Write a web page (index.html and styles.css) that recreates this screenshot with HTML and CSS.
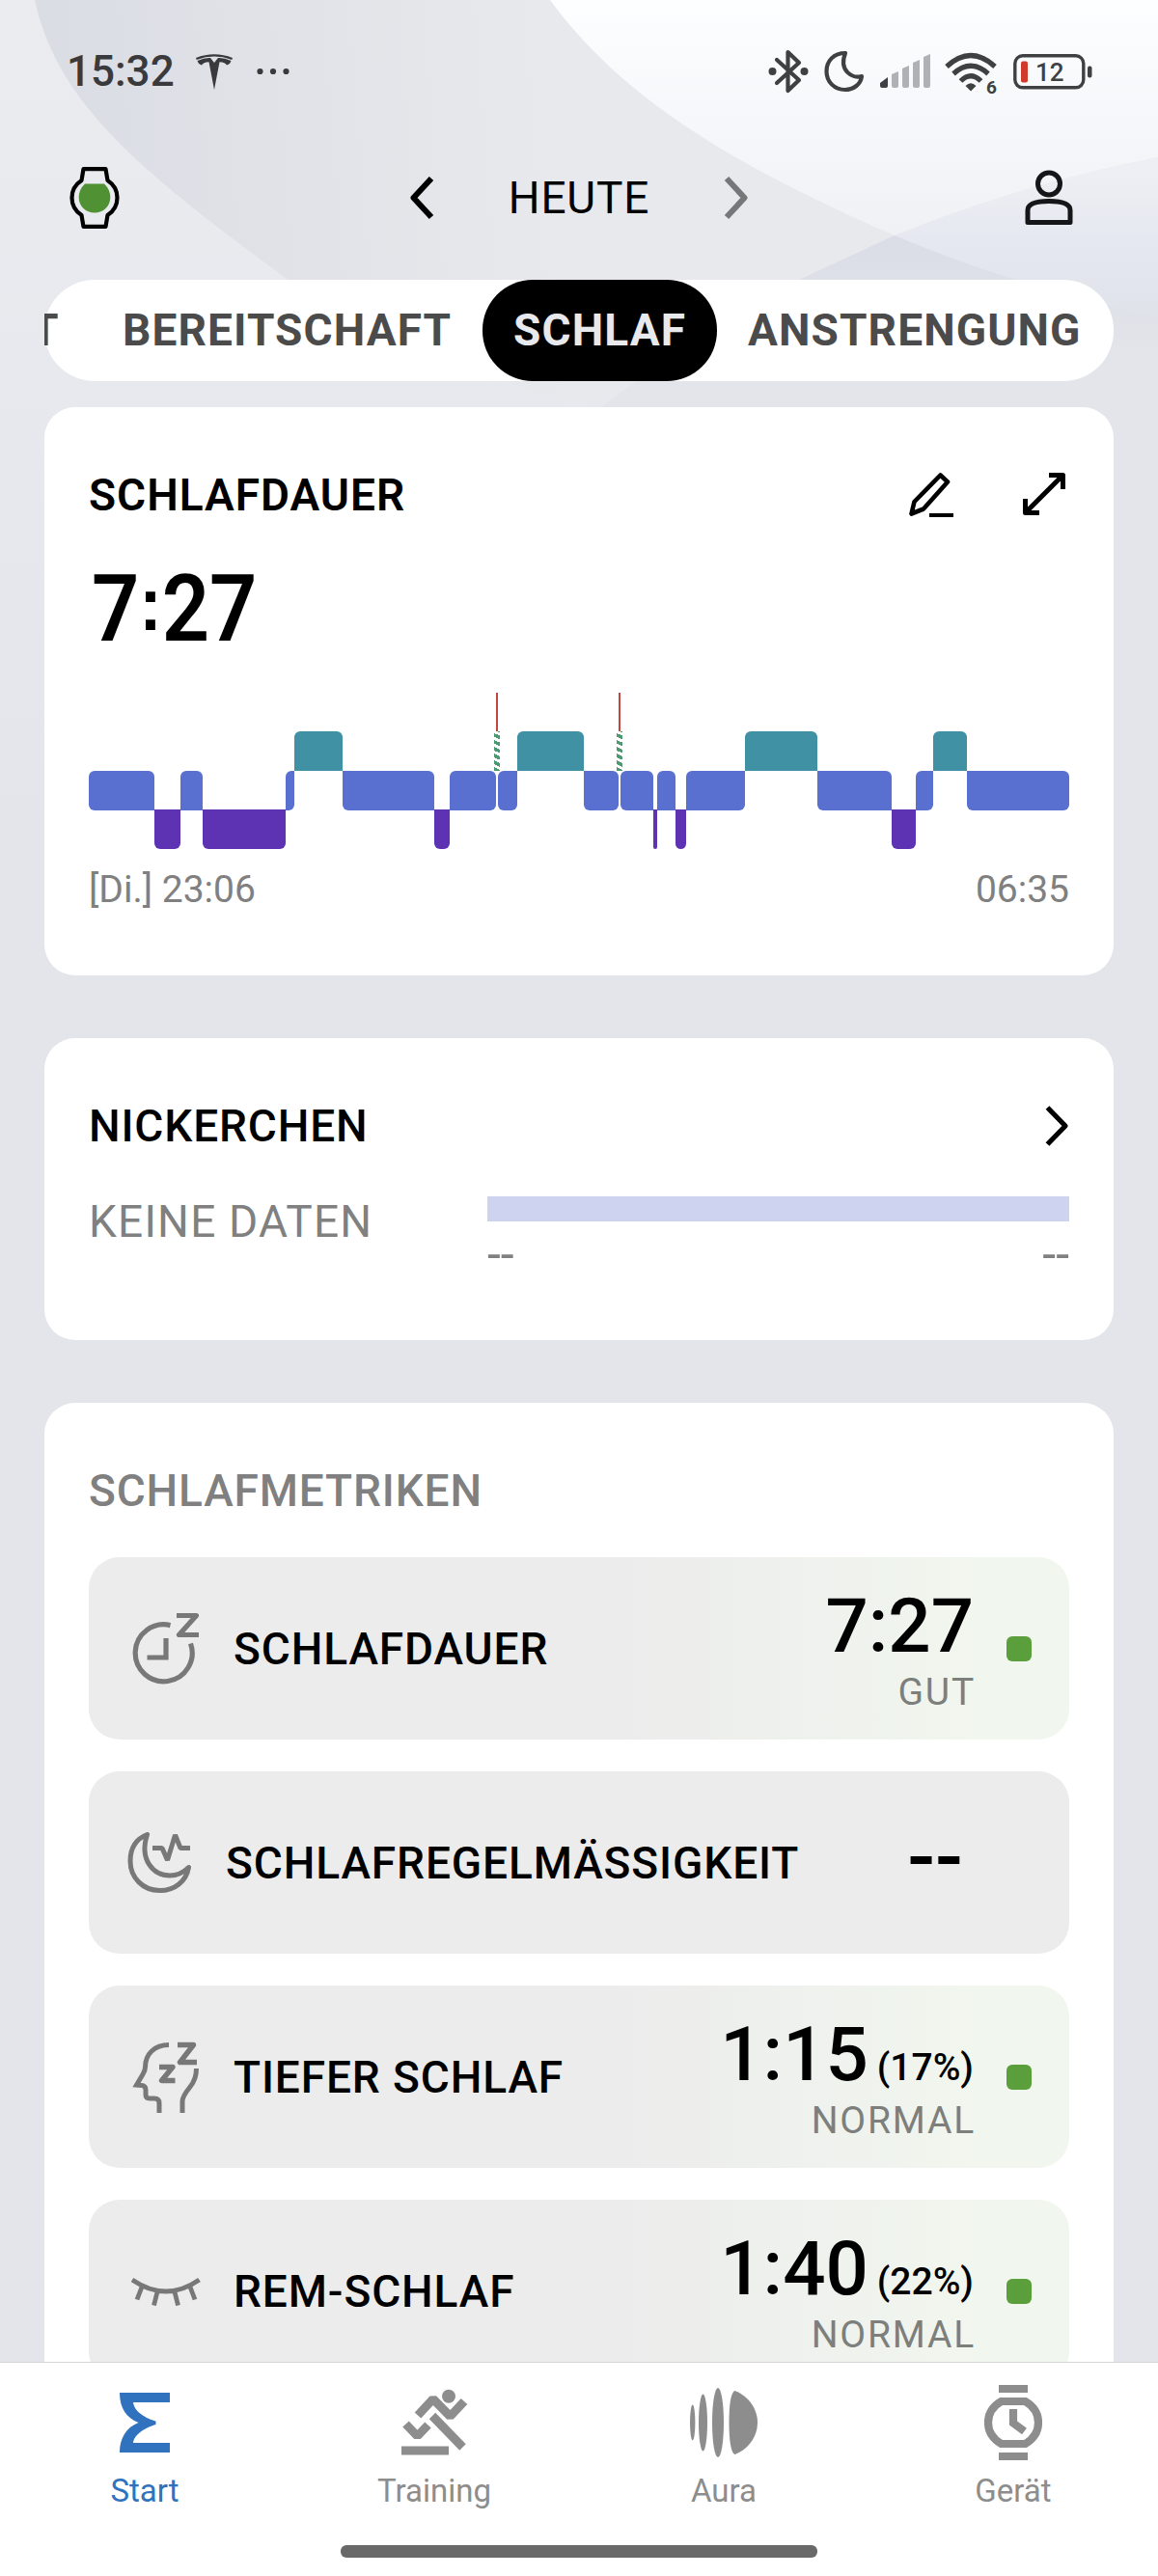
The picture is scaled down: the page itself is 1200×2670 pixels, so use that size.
FILE: index.html
```
<!DOCTYPE html>
<html lang="de">
<head>
    <meta charset="UTF-8">
    <title>Schlaf</title>
    <link rel="stylesheet" href="styles.css">
</head>
<body>
    <svg class="backdrop" width="1200" height="900" viewBox="0 0 1200 900">
        <defs>
            <linearGradient id="base" x1="0" y1="0" x2="0" y2="1">
                <stop offset="0" stop-color="#ebecf0"/>
                <stop offset="1" stop-color="#e4e5eb"/>
            </linearGradient>
            <linearGradient id="disc" gradientUnits="userSpaceOnUse" x1="60" y1="100" x2="560" y2="60">
                <stop offset="0" stop-color="#dadde4"/>
                <stop offset="0.5" stop-color="#e1e3e8"/>
                <stop offset="1" stop-color="#e8e9ed"/>
            </linearGradient>
            <linearGradient id="sky" x1="0" y1="0" x2="0" y2="1">
                <stop offset="0" stop-color="#fdfeff"/>
                <stop offset="1" stop-color="#f0f1f5"/>
            </linearGradient>
            <linearGradient id="side" gradientUnits="userSpaceOnUse" x1="1100" y1="180" x2="1100" y2="320">
                <stop offset="0" stop-color="#eeeff4"/>
                <stop offset="0.5" stop-color="#e5e8f0"/>
                <stop offset="1" stop-color="#e0e3ea"/>
            </linearGradient>
            <linearGradient id="low" gradientUnits="userSpaceOnUse" x1="930" y1="243" x2="930" y2="900">
                <stop offset="0" stop-color="#dadde6"/>
                <stop offset="0.2" stop-color="#e3e5ea"/>
                <stop offset="1" stop-color="#e4e5eb"/>
            </linearGradient>
        </defs>
        <rect width="1200" height="900" fill="url(#base)"/>
        <path d="M36 0C60 110 150 180 297 289Q380 350 600 420L830 289L927 244Q700 150 570 0Z" fill="url(#disc)"/>
        <path d="M570 0C650 110 780 180 927 244Q1060 190 1200 163V0Z" fill="url(#sky)"/>
        <path d="M927 244Q1060 190 1200 163V328Q1060 300 927 244Z" fill="url(#side)"/>
        <path d="M927 244Q1060 300 1200 328V900H1120Q600 600 600 440Q700 360 830 289Z" fill="url(#low)"/>
    </svg>

    <div class="screen">
        <div class="status-bar">
            <span class="clock">15:32</span>
            <svg class="tesla" width="38" height="37" viewBox="0 0 38 37" fill="#3a3a3c">
                <path d="M0 4Q19 -3.500 38 4L37.300 6Q19 -.8 .7 6Z"/>
                <path d="M1.500 7Q9 3.600 15 4L19 9L23 4Q29 3.600 36.500 7Q35.500 10.500 32 11.500Q30.500 8.600 24.500 8.200L19 37L13.500 8.200Q7.500 8.600 6 11.500Q2.500 10.500 1.500 7Z"/>
            </svg>
            <svg class="more" width="34" height="8" viewBox="0 0 34 8" fill="#3a3a3c">
                <circle cx="3.500" cy="4" r="3.100"/><circle cx="17" cy="4" r="3.100"/><circle cx="30.500" cy="4" r="3.100"/>
            </svg>
            <div class="status-icons">
                <svg width="42" height="46" viewBox="0 0 42 46">
                    <path d="M9 11L32 32L20.500 43V3L32 14L9 35" fill="none" stroke="#3f4041" stroke-width="4.200" stroke-linejoin="round" stroke-linecap="round"/>
                    <circle cx="4.500" cy="23" r="4" fill="#3f4041"/><circle cx="37.500" cy="23" r="4" fill="#3f4041"/>
                </svg>
                <svg width="42" height="44" viewBox="0 0 42 44">
                    <path d="M22 3C10 3 2.500 11 2.500 22S11 41 21.500 41C31 41 38 35 39 27C29 30 15 21 22 3Z" fill="none" stroke="#3f4041" stroke-width="4.200" stroke-linejoin="round"/>
                </svg>
                <svg class="signal" width="53" height="36" viewBox="0 0 53 36" fill="#b0b1b4">
                    <path d="M0 30L8 24V33Q8 35 6 35H2Q0 35 0 33Z" fill="#3f4041"/>
                    <path d="M12 21L19 18V33Q19 35 17 35H14Q12 35 12 33Z"/>
                    <path d="M23 15L30 12V33Q30 35 28 35H25Q23 35 23 33Z"/>
                    <path d="M34 9L41 6V33Q41 35 39 35H36Q34 35 34 33Z"/>
                    <path d="M45 3L52 0V33Q52 35 50 35H47Q45 35 45 33Z"/>
                </svg>
                <svg class="wifi" width="56" height="46" viewBox="0 0 56 46">
                    <g fill="none" stroke="#3f4041" stroke-width="5.200">
                        <path d="M2 18Q27 -5 52 18"/><path d="M9 25.500Q27 9 45 25.500"/><path d="M16.500 33Q27 22.500 37.500 33"/>
                    </g>
                    <path d="M21.500 38Q27 32.500 32.500 38L27 43.500Z" fill="#3f4041"/>
                    <text x="43" y="46" font-size="19" font-weight="700" fill="#3f4041">6</text>
                </svg>
                <svg width="82" height="37" viewBox="0 0 82 37">
                    <rect x="1.800" y="1.800" width="71" height="33" rx="8" fill="none" stroke="#3f4041" stroke-width="3.400"/>
                    <rect x="77" y="12.500" width="4.500" height="12" rx="2" fill="#3f4041"/>
                    <rect x="8" y="7.500" width="7" height="22" rx="2" fill="#d03a2c"/>
                    <text x="23" y="28" font-size="26" font-weight="500" fill="#3f4041">12</text>
                </svg>
            </div>
        </div>

        <header class="top-bar">
            <svg width="52" height="64" viewBox="0 0 52 64">
                <path d="M14.500 2.200H37.500L39.500 14Q49.500 20.500 49.500 32T39.500 50L37.500 61.800H14.500L12.500 50Q2.500 43.500 2.500 32T12.500 14Z" fill="none" stroke="#000" stroke-width="4.200" stroke-linejoin="round"/>
                <path d="M16 17.500H36Q42.300 23.500 42.300 31.500C42.300 41 35 47.500 26 47.500S9.700 41 9.700 31.500Q9.700 23.500 16 17.500Z" fill="#509134"/>
            </svg>
            <div class="day-picker">
                <svg width="26" height="46" viewBox="0 0 26 46" fill="none" stroke="#000" stroke-width="6" stroke-linejoin="round"><path d="M23 3L4.500 23L23 43"/></svg>
                <span>HEUTE</span>
                <svg width="26" height="46" viewBox="0 0 26 46" fill="none" stroke="#767779" stroke-width="6" stroke-linejoin="round"><path d="M3 3L21.500 23L3 43"/></svg>
            </div>
            <svg width="50" height="58" viewBox="0 0 50 58" fill="none" stroke="#151617" stroke-width="5">
                <ellipse cx="25" cy="14.500" rx="11.500" ry="11.500"/>
                <path d="M3 54.500V42Q3 32.500 25 32.500T47 42V54.500Z" stroke-linejoin="round"/>
            </svg>
        </header>

        <nav class="tabs">
            <span class="tab tab-cut">T</span>
            <span class="tab tab-ready">BEREITSCHAFT</span>
            <span class="tab active">SCHLAF</span>
            <span class="tab tab-strain">ANSTRENGUNG</span>
        </nav>

        <main>
            <section class="card sleep">
                <div class="card-head">
                    <h2 class="bold">SCHLAFDAUER</h2>
                    <div class="actions">
                        <svg width="48" height="48" viewBox="0 0 48 48" fill="none" stroke="#000" stroke-width="4.600" stroke-linejoin="round">
                            <path d="M33.500 3.500L41 10.500L16 38.500L3.500 43.500L6.500 31Z"/><path d="M22 45H47" stroke-width="4"/>
                        </svg>
                        <svg width="46" height="46" viewBox="0 0 46 46" fill="none" stroke="#000" stroke-width="5" stroke-linejoin="round">
                            <path d="M4 42L42 4M28 3.500H42.500V18M3.500 28V42.500H18"/>
                        </svg>
                    </div>
                </div>
                <div class="duration">7<span class="colon">:</span>27</div>
                <div class="stages">
                    <div class="light" style="width: 68px"></div>
                    <div class="deep" style="width: 27px"></div>
                    <div class="light" style="width: 23px"></div>
                    <div class="deep" style="width: 86px"></div>
                    <div class="light" style="width: 9px"></div>
                    <div class="rem" style="width: 50px"></div>
                    <div class="light" style="width: 95px"></div>
                    <div class="deep" style="width: 16px"></div>
                    <div class="light" style="width: 48px"></div>
                    <div class="awake"></div>
                    <div class="light" style="width: 20px"></div>
                    <div class="rem" style="width: 69px"></div>
                    <div class="light" style="width: 36px"></div>
                    <div class="awake"></div>
                    <div class="light" style="width: 34px"></div>
                    <div class="deep" style="width: 4px"></div>
                    <div class="light" style="width: 19px"></div>
                    <div class="deep" style="width: 11px"></div>
                    <div class="light" style="width: 61px"></div>
                    <div class="rem" style="width: 75px"></div>
                    <div class="light" style="width: 77px"></div>
                    <div class="deep" style="width: 25px"></div>
                    <div class="light" style="width: 18px"></div>
                    <div class="rem" style="width: 35px"></div>
                    <div class="light" style="width: 106px"></div>
                </div>
                <div class="times"><span>[Di.] 23:06</span><span>06:35</span></div>
            </section>

            <section class="card nap">
                <div class="card-head">
                    <h2>NICKERCHEN</h2>
                    <svg width="26" height="44" viewBox="0 0 26 44" fill="none" stroke="#000" stroke-width="5.200" stroke-linejoin="round"><path d="M3.500 3L22 22L3.500 41"/></svg>
                </div>
                <div class="nap-body">
                    <span class="no-data">KEINE DATEN</span>
                    <div class="nap-chart">
                        <div class="nap-bar"></div>
                        <div class="nap-times"><span>--</span><span>--</span></div>
                    </div>
                </div>
            </section>

            <section class="card metrics">
                <h2>SCHLAFMETRIKEN</h2>
                <div class="metric rated">
                    <svg width="72" height="76" viewBox="0 0 72 76" fill="none" stroke="#787878" stroke-width="5.200">
                        <path d="M40.500 13.600A29.500 29.500 0 1 0 61.500 32.500"/>
                        <path d="M36 27V47H16.500"/>
                        <path d="M47 3.500H67.500L49.500 23.500H70" stroke-linejoin="round"/>
                    </svg>
                    <h3>SCHLAFDAUER</h3>
                    <div class="value"><p>7:27</p><small>GUT</small></div>
                    <i class="dot"></i>
                </div>
                <div class="metric regularity">
                    <svg width="68" height="66" viewBox="0 0 68 66" fill="none" stroke="#787878" stroke-width="5">
                        <path d="M20.500 3.500C9 8 3 18 3 31C3 48 16 61.500 33.500 61.500C49 61.500 61 52 63.500 37.500C57 44 51 46 44 46C27 46 12 30 20.500 3.500Z" stroke-linejoin="round"/>
                        <path d="M26 17.500H36L41.500 30L49.500 4L55 17.500H65" stroke-linejoin="bevel"/>
                    </svg>
                    <h3>SCHLAFREGELMÄSSIGKEIT</h3>
                    <div class="value"><p>--</p></div>
                </div>
                <div class="metric rated">
                    <svg width="72" height="76" viewBox="0 0 72 76" fill="none" stroke="#787878" stroke-width="5">
                        <path d="M39 4.500C24 4.500 14.500 14 14.500 27.500Q14.500 31 12 35L5.500 46L11 46.500Q15 47 15 51V56Q15 60 19 60H24Q29 60 29 65V75"/>
                        <path d="M67.500 29Q67.500 40 61 48Q53 58 53 63V75"/>
                        <path d="M48 4.500H64.500L50.500 22.500H68M29 27.500H43L31.500 41.500H45.500" stroke-width="5.400" stroke-linejoin="round"/>
                    </svg>
                    <h3>TIEFER SCHLAF</h3>
                    <div class="value"><p>1:15<b>(17%)</b></p><small>NORMAL</small></div>
                    <i class="dot"></i>
                </div>
                <div class="metric rated">
                    <svg width="72" height="32" viewBox="0 0 72 32" fill="none" stroke="#787878" stroke-width="4.800">
                        <path d="M1 4Q36 28 70.500 4M11.500 10L6 24.500M27 16.500L23.500 30.500M45 16.500L48.500 30.500M60.500 10L66 24.500"/>
                    </svg>
                    <h3>REM-SCHLAF</h3>
                    <div class="value"><p>1:40<b>(22%)</b></p><small>NORMAL</small></div>
                    <i class="dot"></i>
                </div>
            </section>
        </main>

        <footer class="bottom">
            <nav class="bottom-nav">
                <div class="item current">
                    <svg width="52" height="78" viewBox="0 0 52 78" fill="#3172bf">
                        <path d="M0 8H52V18H14C15 28 28 35 37.500 37.500V41C28 43.500 15 51 14 60H52V70H0C0 55 7 44 19.500 39C7 34 0 24 0 8Z"/>
                    </svg>
                    <span>Start</span>
                </div>
                <div class="item">
                    <svg width="70" height="78" viewBox="0 0 70 78" fill="none" stroke="#8d8d8d" stroke-width="9">
                        <ellipse cx="50" cy="11.800" rx="7" ry="7" fill="#8d8d8d" stroke="none"/>
                        <path d="M18 31.500L33.800 14.500L51.500 32.500L66 17" stroke-linejoin="bevel"/>
                        <path d="M33 32L64.500 64.500M5.500 40.500L17.500 53L28.500 41.500" stroke-linejoin="bevel"/>
                        <path d="M1 68H50"/>
                    </svg>
                    <span>Training</span>
                </div>
                <div class="item aura">
                    <svg width="70" height="78" viewBox="0 0 70 78" fill="#8d8d8d">
                        <ellipse cx="2.700" cy="39" rx="2.700" ry="18.500"/>
                        <ellipse cx="13.500" cy="39" rx="4.500" ry="29.500"/>
                        <ellipse cx="29" cy="39" rx="6" ry="36"/>
                        <path d="M46.500 6C60 11 70 24 70 39S60 67 46.500 72C42 70 40.500 55 40.500 39S42 8 46.500 6Z"/>
                    </svg>
                    <span>Aura</span>
                </div>
                <div class="item">
                    <svg width="60" height="78" viewBox="0 0 60 78" fill="none" stroke="#8d8d8d" stroke-width="8.200">
                        <path d="M15 4H45M15 74H45"/>
                        <path d="M17.500 17H42.500Q56 25 56 39T42.500 61H17.500Q4 53 4 39T17.500 17Z"/>
                        <path d="M30 25V39.500L41.500 48"/>
                    </svg>
                    <span>Gerät</span>
                </div>
            </nav>
            <div class="home-bar"></div>
        </footer>
    </div>
</body>
</html>
```
FILE: styles.css
```
* {
    box-sizing: border-box;
}

body {
    margin: 0;
    background-color: #e4e5eb;
    color: #000;
    font-family: Roboto, sans-serif;
}

svg {
    display: block;
    flex-shrink: 0;
}

h2, h3, p {
    margin: 0;
    font-weight: 500;
}

/* curved shapes behind the whole screen */
.backdrop {
    position: absolute;
    top: 0;
    left: 0;
    z-index: -1;
}

.screen {
    display: flex;
    flex-direction: column;
    width: 1200px;
    height: 2670px;
    overflow: hidden;
}

.status-bar {
    display: flex;
    align-items: center;
    flex-shrink: 0;
    height: 148px;
    padding: 0 68px 0 69px;
}

.clock {
    width: 134px;
    font-size: 44px;
    font-weight: 500;
    color: #3a3a3c;
}

.more {
    margin-left: 25px;
}

.status-icons {
    display: flex;
    align-items: center;
    gap: 16px;
    margin-left: auto;
}

.signal {
    margin-right: -2px;
}

.wifi {
    margin-right: -1px;
    overflow: visible;
}

.top-bar {
    display: flex;
    align-items: center;
    justify-content: space-between;
    flex-shrink: 0;
    height: 114px;
    padding: 0 88px 0 72px;
}

.day-picker {
    display: flex;
    align-items: center;
    justify-content: space-between;
    width: 352px;
    margin-left: 14px;
    font-size: 46px;
    font-weight: 450;
    letter-spacing: 0.8px;
}

.tabs {
    display: flex;
    flex-shrink: 0;
    width: 1108px;
    height: 105px;
    margin: 28px 46px 27px;
    border-radius: 52px;
    background-color: #fff;
}

.tab {
    font-size: 46px;
    font-weight: 700;
    line-height: 105px;
    letter-spacing: 1.1px;
    color: #4b4b4b;
}

.tab-cut {
    width: 80px;
    overflow: hidden;
    text-indent: -14px;
}

.tab-ready {
    width: 374px;
    padding-left: 1px;
}

.active {
    width: 243px;
    border-radius: 52px;
    background-color: #000;
    color: #e8e9ed;
    text-align: center;
}

.tab-strain {
    margin-left: 32px;
}

main {
    display: flex;
    flex-direction: column;
    flex: 1;
    gap: 65px;
    min-height: 0;
    overflow: hidden;
    padding: 0 46px;
}

.card {
    flex-shrink: 0;
    padding: 66px 46px 0;
    border-radius: 32px;
    background-color: #fff;
}

.card h2 {
    font-size: 46px;
    line-height: 50px;
    letter-spacing: 0.85px;
}

.card h2.bold {
    font-weight: 600;
    letter-spacing: 1px;
}

.card-head {
    display: flex;
    align-items: center;
    justify-content: space-between;
    height: 50px;
}

.sleep {
    height: 589px;
}

.actions {
    display: flex;
    gap: 70px;
    padding-right: 3px;
}

.duration {
    width: 300px;
    height: 80px;
    margin: 53px 0 47px 3px;
    font-size: 96px;
    font-weight: 600;
    line-height: 80px;
    transform: scaleX(0.9);
    transform-origin: left;
}

.colon {
    font-family: "Liberation Sans", sans-serif;
    font-size: 78px;
    font-weight: 700;
    line-height: 1px;
    vertical-align: 11px;
}

/* sleep stages: awake on top, then rem, light and deep */
.stages {
    display: flex;
    height: 162px;
}

.light {
    height: 41px;
    margin-top: 81px;
    border-radius: 6px;
    background-color: #5970d0;
}

.rem {
    height: 41px;
    margin-top: 40px;
    border-radius: 6px 6px 0 0;
    background-color: #4191a4;
}

.deep {
    height: 41px;
    margin-top: 121px;
    border-radius: 0 0 6px 6px;
    background-color: #5d33b3;
}

.rem + .light {
    border-top-left-radius: 0;
}

.deep + .light {
    border-bottom-left-radius: 0;
}

.light:has(+ .rem) {
    border-top-right-radius: 0;
}

.light:has(+ .deep) {
    border-bottom-right-radius: 0;
}

.awake {
    width: 6px;
    height: 81px;
    margin: 0 -2px;
    background:
        linear-gradient(#c2463f, #c2463f) 2px 0 / 2px 40px no-repeat,
        repeating-linear-gradient(25deg, #4d9a72 0 3.500px, #fff 3.500px 6.400px) 0 40px / 6px 41px no-repeat;
}

.times {
    display: flex;
    justify-content: space-between;
    margin-top: 18px;
    font-size: 39px;
    line-height: 48px;
    color: #808080;
}

.nap {
    height: 313px;
}

.nap-body {
    display: flex;
    justify-content: space-between;
    margin-top: 48px;
}

.no-data {
    font-size: 46px;
    line-height: 52px;
    letter-spacing: 1.2px;
    color: #808080;
}

.nap-chart {
    width: 603px;
}

.nap-bar {
    height: 26px;
    background-color: #ced4ef;
}

.nap-times {
    display: flex;
    justify-content: space-between;
    font-size: 50px;
    line-height: 69px;
    color: #808080;
}

.metrics h2 {
    margin-bottom: 44px;
    color: #808080;
}

.metric {
    display: flex;
    align-items: center;
    height: 189px;
    margin-bottom: 33px;
    padding: 0 39px 0 44px;
    border-radius: 32px;
    background-color: #ececec;
}

.rated {
    background: linear-gradient(to right, #ececec 54%, #f1f6ee 90%);
}

.metric h3 {
    margin-left: 34px;
    font-size: 46px;
    letter-spacing: 0.9px;
    white-space: nowrap;
}

.value {
    margin-left: auto;
    padding-top: 4px;
    text-align: right;
}

.value p {
    height: 84px;
    margin: 0 -1px 3px 0;
    font-size: 78px;
    line-height: 84px;
    white-space: nowrap;
}

.value b {
    margin-left: 9px;
    font-size: 39px;
    font-weight: 500;
    line-height: 1;
}

.value small {
    display: block;
    margin-right: -3px;
    font-size: 39px;
    line-height: 46px;
    letter-spacing: 1.800px;
    color: #7d7f7c;
}

.dot {
    width: 26px;
    height: 26px;
    margin-left: 35px;
    border-radius: 6px;
    background-color: #5b9f3c;
}

.regularity {
    padding: 0 111px 0 40px;
}

.regularity .value {
    padding: 0 0 8px;
}

.regularity .value p {
    font-size: 85px;
}

.bottom {
    flex-shrink: 0;
    height: 222px;
    border-top: 1px solid #d4d4d8;
    background-color: #fff;
}

.bottom-nav {
    display: flex;
    height: 189px;
    padding-top: 23px;
}

.item {
    display: flex;
    flex-direction: column;
    align-items: center;
    gap: 12px;
    width: 300px;
    font-size: 33px;
    line-height: 40px;
    color: #8d8d8d;
}

.current {
    color: #3172bf;
}

.home-bar {
    width: 494px;
    height: 13px;
    margin: 0 auto;
    border-radius: 6px;
    background-color: #696969;
}
```
